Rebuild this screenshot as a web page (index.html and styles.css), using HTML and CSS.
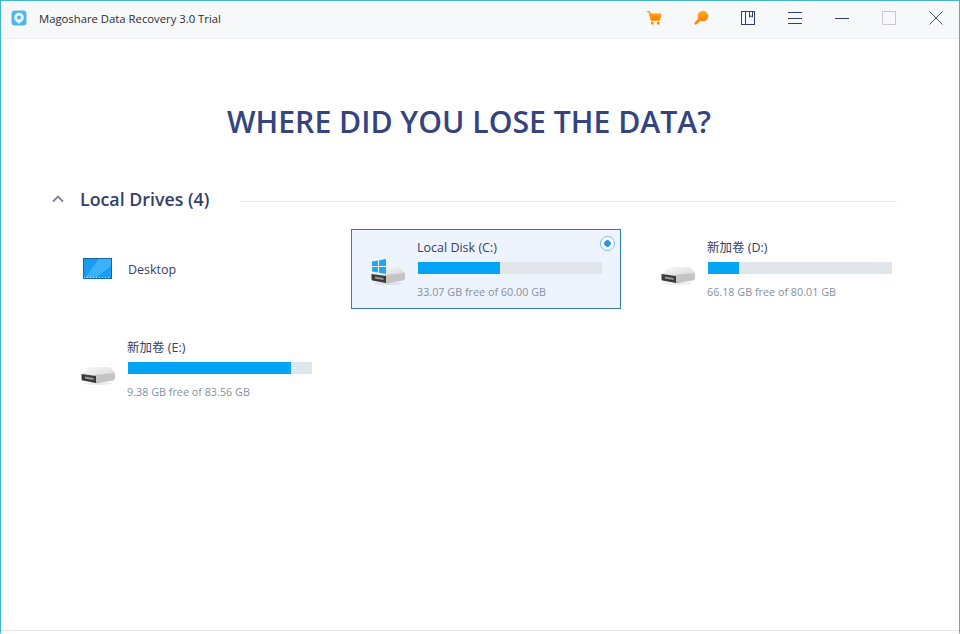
FILE: index.html
```html
<!doctype html>
<html lang="en">
<head>
    <meta charset="UTF-8">
    <title>Magoshare Data Recovery 3.0 Trial</title>
    <link rel="stylesheet" href="styles.css">
</head>
<body>
    <svg class="defs" width="0" height="0">
        <defs>
            <linearGradient id="hdd-top" x1="0" y1="0" x2="1" y2="1">
                <stop offset="0" stop-color="#fbfbfb"/>
                <stop offset="1" stop-color="#d6d6d6"/>
            </linearGradient>
            <linearGradient id="orange" x1="0" y1="0" x2="0" y2="1">
                <stop offset="0" stop-color="#ffb21a"/>
                <stop offset="1" stop-color="#ff7a00"/>
            </linearGradient>
            <symbol id="hdd" viewBox="0 0 34 20">
                <path d="M8 1 H27 Q29 1 30 2 L34 7 V9 L14 10 L1 8 Z" fill="url(#hdd-top)"/>
                <path d="M14 9 L34 7 V12 Q34 14 32 14.500 L17 17 Q15 17.500 14 17 Z" fill="#c4c4c4"/>
                <path d="M0.500 8 L15 10 V17 L1.500 14.500 Q0.500 14 0.500 13 Z" fill="#3a3a3a"/>
                <path d="M4 10.500 L12.500 12 V14 L4 12.500 Z" fill="#9a9a9a"/>
                <ellipse cx="17" cy="17.500" rx="14" ry="1.500" fill="#000" opacity="0.080"/>
            </symbol>
        </defs>
    </svg>
    <div class="window">
        <header class="titlebar">
            <svg class="app-logo" width="16" height="16" viewBox="0 0 16 16">
                <rect x="0.500" y="0.500" width="15" height="15" rx="3.500" fill="#4cb8ea"/>
                <circle cx="8" cy="7.500" r="4.800" fill="#eaf7fd"/>
                <path d="M5 11 L8 14 L11 11 Z" fill="#eaf7fd"/>
                <circle cx="8" cy="7.500" r="2" fill="#4cb8ea"/>
            </svg>
            <span class="app-title">Magoshare Data Recovery 3.0 Trial</span>
            <div class="tools">
                <button class="tool">
                    <svg width="16" height="16" viewBox="0 0 16 16">
                        <path d="M1 1.500 H3.500 L5 4 H15 L13.500 10.500 H5.200 L3 2.500" fill="url(#orange)" stroke="#ff9a10" stroke-width="1"/>
                        <rect x="5" y="12" width="2.500" height="2.500" fill="#ff8a00"/>
                        <rect x="11" y="12" width="2.500" height="2.500" fill="#ff8a00"/>
                    </svg>
                </button>
                <button class="tool">
                    <svg width="16" height="16" viewBox="0 0 16 16">
                        <circle cx="10" cy="6" r="5.300" fill="url(#orange)"/>
                        <path d="M7 7 L9 9.200 L4 14 Q2.800 15 2 14.500 L1.500 13.800 Q1 13 2 12 Z" fill="#ff8a00"/>
                    </svg>
                </button>
                <button class="tool">
                    <svg width="14" height="14" viewBox="0 0 14 14" fill="none" stroke="#34406b">
                        <rect x="0.500" y="0.500" width="13" height="13"/>
                        <path d="M4.500 0.500 V13.500 M8.500 0.500 V6 L10 4.800 L11.500 6 V0.500"/>
                    </svg>
                </button>
                <button class="tool">
                    <svg width="14" height="14" viewBox="0 0 14 14" stroke="#34406b">
                        <path d="M0 1.500 H14 M0 7.500 H14 M0 12.500 H14"/>
                    </svg>
                </button>
                <button class="tool">
                    <svg width="14" height="14" viewBox="0 0 14 14" stroke="#34406b">
                        <path d="M0 7.500 H14"/>
                    </svg>
                </button>
                <button class="tool">
                    <svg width="14" height="14" viewBox="0 0 14 14" fill="none" stroke="#c5cad8">
                        <rect x="0.500" y="0.500" width="13" height="13"/>
                    </svg>
                </button>
                <button class="tool">
                    <svg width="14" height="14" viewBox="0 0 14 14" stroke="#45506f">
                        <path d="M0.500 0.500 L13.500 13.500 M13.500 0.500 L0.500 13.500"/>
                    </svg>
                </button>
            </div>
        </header>

        <main class="content">
            <h1 class="heading">WHERE DID YOU LOSE THE DATA?</h1>

            <section class="drives">
                <div class="section-head">
                    <svg class="chevron" width="12" height="8" viewBox="0 0 12 8" fill="none" stroke="#7b8496" stroke-width="1.800">
                        <path d="M1 6.500 L6 1.500 L11 6.500"/>
                    </svg>
                    <h2 class="section-title">Local Drives (4)</h2>
                    <div class="section-line"></div>
                </div>

                <div class="drive-grid">
                    <div class="drive drive-plain">
                        <svg class="desktop-icon" width="29" height="22" viewBox="0 0 29 22">
                            <rect x="0.500" y="0.500" width="28" height="20" fill="#1a9cf5" stroke="#15659f"/>
                            <path d="M16 1 H28 V8 L12 20 H2 Z" fill="#3db2fb"/>
                            <path d="M1 19.500 H28" stroke="#cfe8fa" stroke-dasharray="1 2"/>
                        </svg>
                        <span class="drive-name">Desktop</span>
                    </div>

                    <div class="drive selected">
                        <div class="drive-icon">
                            <svg class="win-badge" width="14" height="15" viewBox="0 0 14 15" fill="#22a7ea">
                                <path d="M0 2.500 L6 1.500 V7 H0 Z M7 1.300 L14 0 V7 H7 Z M0 8 H6 V13.500 L0 12.500 Z M7 8 H14 V15 L7 13.700 Z"/>
                            </svg>
                            <svg width="34" height="20"><use href="#hdd"/></svg>
                        </div>
                        <div class="drive-info">
                            <div class="drive-name">Local Disk (C:)</div>
                            <div class="bar"><div class="bar-fill" style="width: 44.400%"></div></div>
                            <div class="drive-free">33.07 GB free of 60.00 GB</div>
                        </div>
                        <span class="radio"></span>
                    </div>

                    <div class="drive">
                        <div class="drive-icon">
                            <svg width="34" height="20"><use href="#hdd"/></svg>
                        </div>
                        <div class="drive-info">
                            <div class="drive-name">新加卷 (D:)</div>
                            <div class="bar"><div class="bar-fill" style="width: 16.800%"></div></div>
                            <div class="drive-free">66.18 GB free of 80.01 GB</div>
                        </div>
                    </div>

                    <div class="drive">
                        <div class="drive-icon">
                            <svg width="34" height="20"><use href="#hdd"/></svg>
                        </div>
                        <div class="drive-info">
                            <div class="drive-name">新加卷 (E:)</div>
                            <div class="bar"><div class="bar-fill" style="width: 88.800%"></div></div>
                            <div class="drive-free">9.38 GB free of 83.56 GB</div>
                        </div>
                    </div>
                </div>
            </section>
        </main>
    </div>
</body>
</html>
```

FILE: styles.css
```css
html, body{
    height: 100%;
}
body{
    margin: 0;
    background: #ffffff;
    font-family: "Open Sans", "Noto Sans CJK SC", sans-serif;
    color: #34406b;
}
.defs{
    position: absolute;
}
.window{
    box-sizing: border-box;
    height: 634px;
    display: flex;
    flex-direction: column;
    border-top: 1px solid #45b5cb;
    border-left: 1px solid #45b5cb;
    border-right: 1px solid #45b5cb;
    border-bottom: 1px solid #ffffff;
}

/* title bar */
.titlebar{
    height: 38px;
    flex: none;
    display: flex;
    align-items: center;
    box-sizing: border-box;
    padding-left: 10px;
    background: #f7f8fa;
    border-bottom: 1px solid #eeeff2;
}
.app-logo{
    margin-right: 12px;
    margin-top: -3px;
}
.app-title{
    font-size: 11.300px;
    color: #2b2b33;
    margin-top: -3px;
}
.tools{
    margin-left: auto;
    display: flex;
    margin-top: -4px;
}
.tool{
    width: 47px;
    height: 24px;
    padding: 0;
    background: none;
    border: none;
    display: flex;
    align-items: center;
    justify-content: center;
}

/* main */
.content{
    flex: 1;
    border-bottom: 1px solid #e4e4e4;
    margin-bottom: 2px;
    padding: 0 62px 0 0;
}
.heading{
    margin: 63px 0 0 0;
    padding-left: 40px;
    text-align: center;
    font-size: 30.200px;
    line-height: 40px;
    font-weight: 600;
    color: #34447f;
}
.section-head{
    display: flex;
    align-items: center;
    margin-top: 46px;
    height: 22px;
    padding-left: 51px;
}
.chevron{
    margin-right: 16px;
}
.section-title{
    margin: 0;
    font-size: 17.800px;
    font-weight: 600;
    color: #34406b;
}
.section-line{
    flex: 1;
    height: 1px;
    margin-top: 4px;
    margin-left: 32px;
    background: #e9ebef;
}
.drive-grid{
    display: grid;
    grid-template-columns: repeat(3, 270px);
    grid-auto-rows: 80px;
    gap: 20px;
    margin-top: 19px;
    padding-left: 60px;
}
.drive{
    position: relative;
    box-sizing: border-box;
    display: flex;
    align-items: center;
    padding: 0 20px;
    border: 1px solid transparent;
}
.drive.selected{
    background: #eef4fd;
    border-color: #2f80a8;
}
.drive-plain .drive-name{
    margin: 2px 0 0 16px;
}
.desktop-icon{
    flex: none;
    margin-left: 1px;
}
.drive-icon{
    position: relative;
    width: 34px;
    height: 20px;
    margin-top: 13px;
    margin-right: 11px;
    flex: none;
    margin-left: -1px;
}
.win-badge{
    position: absolute;
    left: 1px;
    top: -7px;
}
.drive-info{
    width: 185px;
    flex: none;
    margin-left: 1px;
}
.drive-name{
    font-size: 12.500px;
    line-height: 18px;
    color: #34406b;
}
.bar{
    height: 12px;
    margin: 5px 0 0 1px;
    background: #e1e6ed;
}
.bar-fill{
    height: 100%;
    background: #05a5f5;
}
.drive-free{
    font-size: 10.800px;
    line-height: 16px;
    margin-top: 10px;
    color: #87919f;
}
.radio{
    position: absolute;
    top: 6px;
    right: 5px;
    box-sizing: border-box;
    width: 15px;
    height: 15px;
    border: 1px solid #74bdf0;
    border-radius: 50%;
    background: radial-gradient(circle, #2a98e8 0, #2a98e8 3px, #ffffff 3.500px);
}
```
